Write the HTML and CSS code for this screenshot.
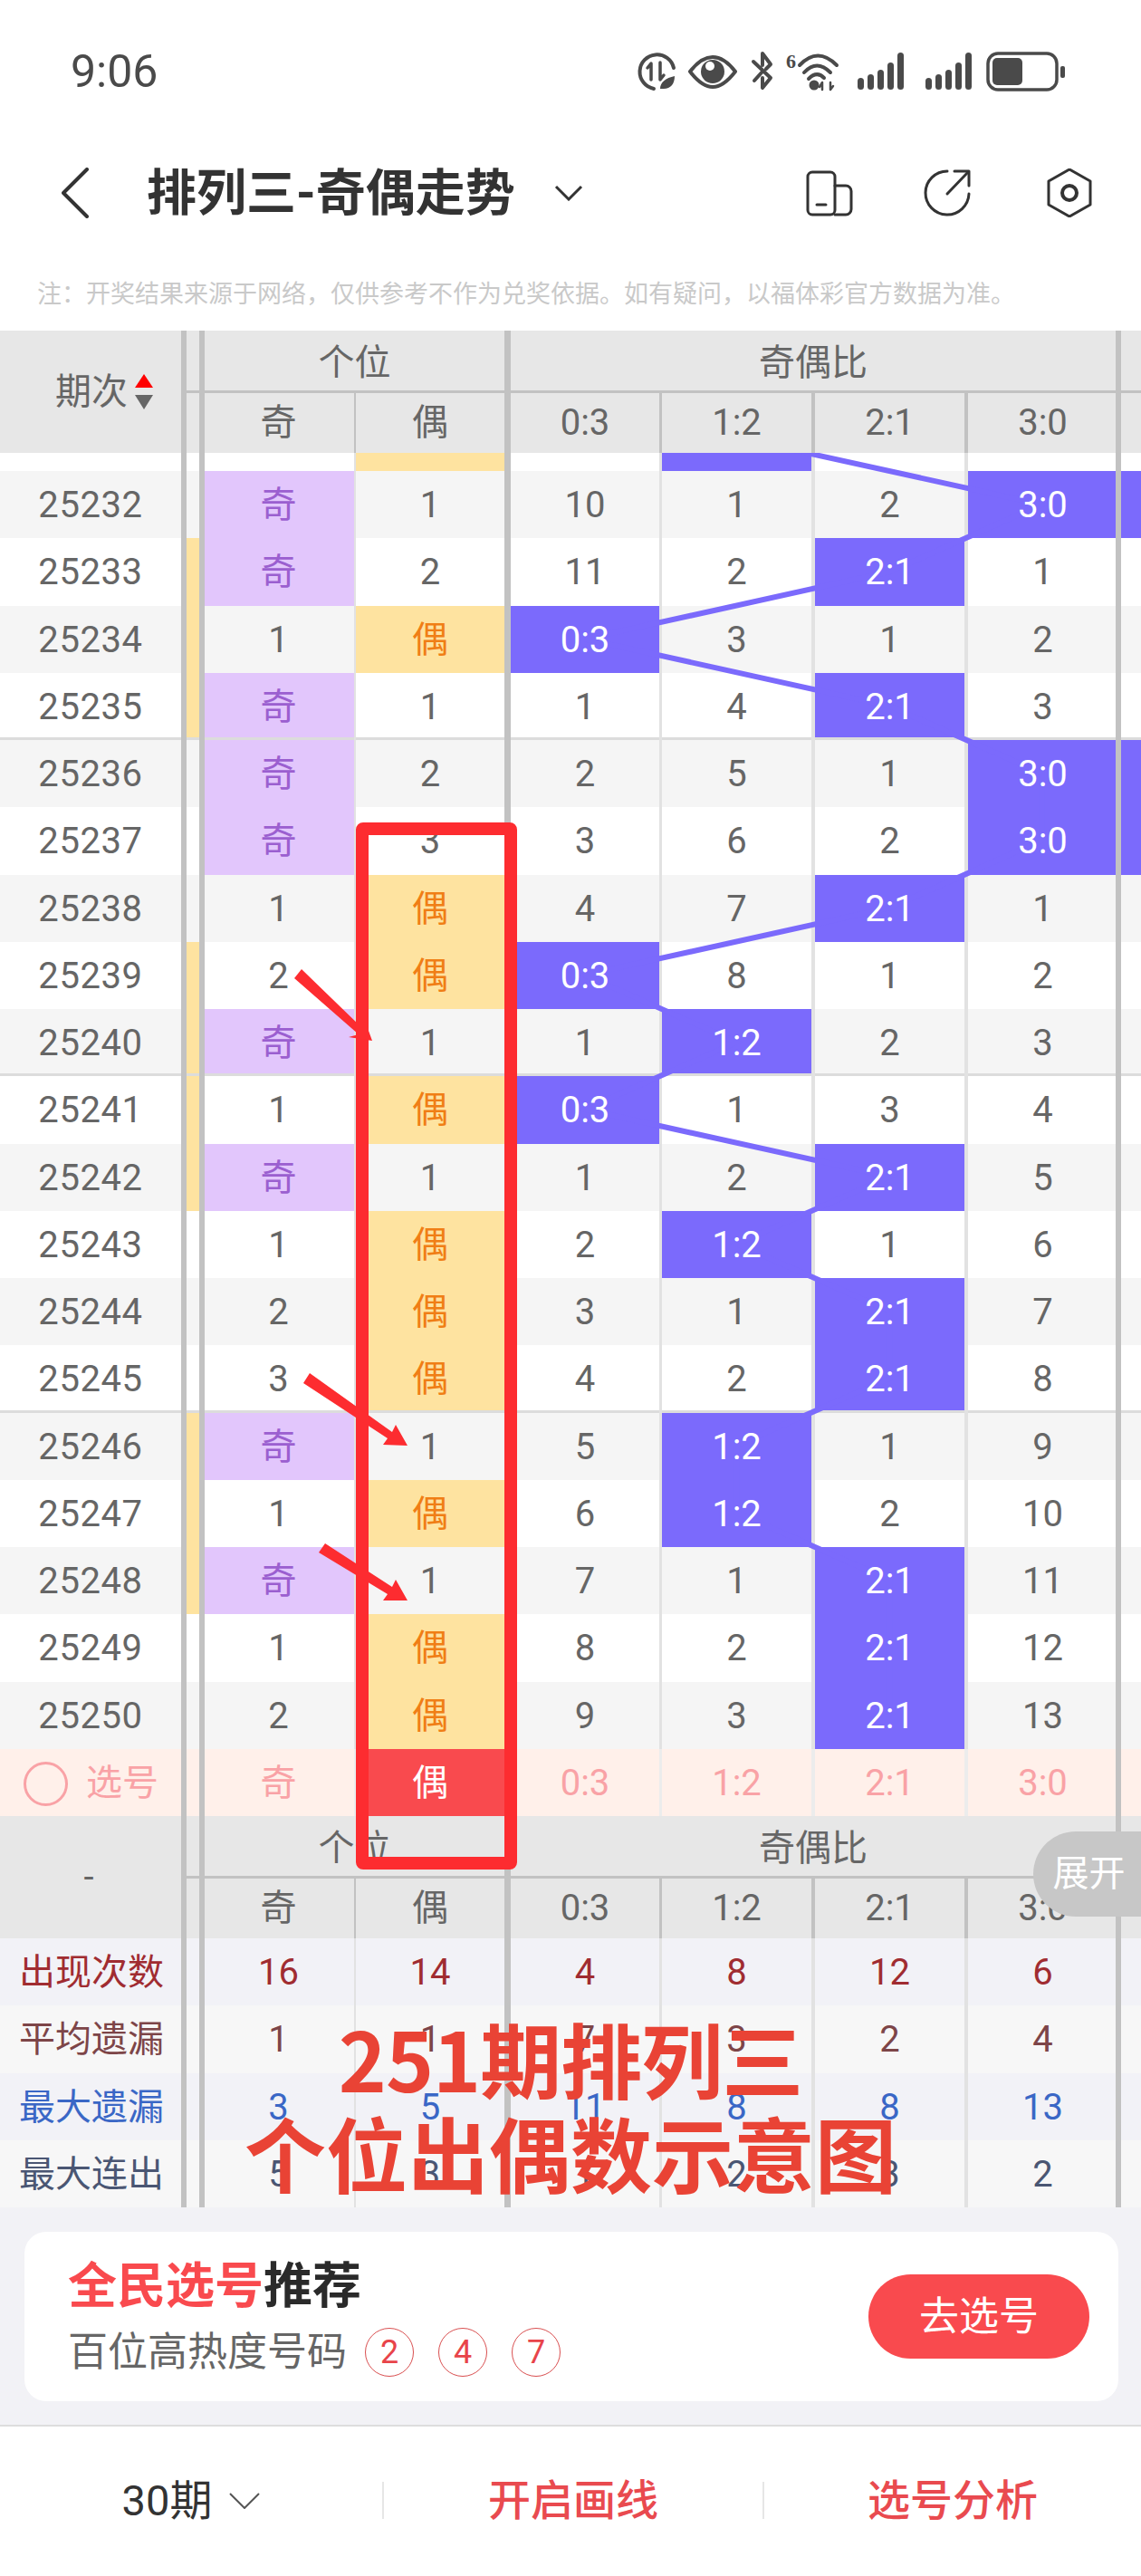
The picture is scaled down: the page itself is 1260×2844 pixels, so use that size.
FILE: index.html
```html
<!DOCTYPE html>
<html lang="zh-CN">
<head>
<meta charset="utf-8">
<title>排列三-奇偶走势</title>
<link rel="stylesheet" href="styles.css">
</head>
<body>
<div class="page">
  <header class="status">
    <span class="time">9:06</span>
    <svg class="status-icons" width="480" height="56" viewBox="700 50 480 56">
      <g fill="none" stroke="#4a4a4a" stroke-width="4" stroke-linecap="round" stroke-linejoin="round">
        <path d="M744 74A19 19 0 1 0 722 97"/>
        <path d="M719 87V69l-4 5M729 68V87l4-5" stroke-width="3.5"/>
        <path d="M762 78C772 65 780 62 787 62S802 65 812 78C802 91 794 95 787 95S772 91 762 78Z"/>
        <path d="M832 67L851 85L842 96V85M842 71V58L851 70L846 75M842 78L833 88"/>
        <path d="M883 71Q903 50 924 71"/>
        <path d="M888 79Q902 64 917 79"/>
        <path d="M893 86Q902 77 910 85"/>
        <path d="M908 98V90l-3 5M917 90V98l3-4" stroke-width="2.5"/>
      </g>
      <path d="M729 97C729 90 735 85 745 83C745 92 740 98 731 97Z" fill="#4a4a4a"/>
      <circle cx="787" cy="78" r="13" fill="#4a4a4a"/>
      <circle cx="784" cy="72" r="5" fill="#fff"/>
      <text class="six" x="868" y="74">6</text>
      <circle cx="899" cy="93" r="5.5" fill="#4a4a4a"/>
      <g fill="#4a4a4a">
        <rect x="947" y="85" width="7" height="13" rx="3.5"/>
        <rect x="958" y="81" width="7" height="17" rx="3.5"/>
        <rect x="969" y="76" width="7" height="22" rx="3.5"/>
        <rect x="980" y="68" width="7" height="30" rx="3.5"/>
        <rect x="991" y="57" width="7" height="41" rx="3.5"/>
        <rect x="1022" y="85" width="7" height="13" rx="3.5"/>
        <rect x="1033" y="81" width="7" height="17" rx="3.5"/>
        <rect x="1044" y="76" width="7" height="22" rx="3.5"/>
        <rect x="1055" y="68" width="7" height="30" rx="3.5"/>
        <rect x="1066" y="57" width="7" height="41" rx="3.5"/>
        <rect x="1096" y="63" width="33" height="30" rx="5"/>
        <rect x="1171" y="72" width="5" height="13" rx="2"/>
      </g>
      <rect x="1091" y="58" width="76" height="40" rx="11" fill="none" stroke="#4a4a4a" stroke-width="3.5"/>
    </svg>
  </header>

  <nav class="nav">
    <svg class="back" width="30" height="56" viewBox="68 183 30 56"><path d="M96 185L70 211L96 237" fill="none" stroke="#333" stroke-width="4" stroke-linecap="round" stroke-linejoin="round"/></svg>
    <h1 class="title">排列三-奇偶走势</h1>
    <svg class="caret" width="32" height="18" viewBox="0 0 32 18"><path d="M2 2L16 16L30 2" fill="none" stroke="#333" stroke-width="3"/></svg>
    <svg class="act act-first" width="52" height="54" viewBox="890 185 52 54">
      <g fill="none" stroke="#333" stroke-width="3" stroke-linecap="round"><rect x="892" y="189" width="30" height="47" rx="5"/><path d="M922 204h12a6 6 0 0 1 6 6v20a6 6 0 0 1-6 6h-12"/><path d="M902 225h10"/></g>
    </svg>
    <svg class="act act-second" width="52" height="54" viewBox="1019 185 52 54">
      <g fill="none" stroke="#333" stroke-width="3" stroke-linecap="round" stroke-linejoin="round"><path d="M1045 188A24 24 0 1 0 1069 213"/><path d="M1045 213L1068 189"/><path d="M1053 188H1069V204"/></g>
    </svg>
    <svg class="act act-third" width="52" height="54" viewBox="1156 185 52 54">
      <g fill="none" stroke="#333" stroke-width="3" stroke-linejoin="round"><path d="M1182 186L1205 199V225L1182 238L1159 225V199Z"/><circle cx="1182" cy="212" r="8" stroke-width="4"/></g>
    </svg>
  </nav>

  <p class="note">注：开奖结果来源于网络，仅供参考不作为兑奖依据。如有疑问，以福体彩官方数据为准。</p>

  <section class="chart">
    <div class="thead">
      <div class="corner"><span>期次</span><span class="sorter"><i class="tri-up"></i><i class="tri-down"></i></span></div>
      <div class="gap"></div>
      <div class="group group-one">个位</div>
      <div class="group group-two">奇偶比</div>
      <div class="gap gap-end"></div>
      <div class="hgap"></div>
      <div class="cell">奇</div><div class="cell">偶</div><div class="cell">0:3</div><div class="cell">1:2</div><div class="cell">2:1</div><div class="cell">3:0</div><div class="cell"></div>
    </div>

    <div class="rows">
      <div class="row row-cut"><div class="id"></div><div class="st"></div><div class="cell"></div><div class="cell even"><span>偶</span></div><div class="cell"></div><div class="cell on"></div><div class="cell"></div><div class="cell"></div><div class="cell"></div></div>
      <div class="row grey"><div class="id">25232</div><div class="st"></div><div class="cell odd"><span>奇</span></div><div class="cell"><span>1</span></div><div class="cell"><span>10</span></div><div class="cell"><span>1</span></div><div class="cell"><span>2</span></div><div class="cell on"><span>3:0</span></div><div class="cell on"></div></div>
      <div class="row"><div class="id">25233</div><div class="st mark"></div><div class="cell odd"><span>奇</span></div><div class="cell"><span>2</span></div><div class="cell"><span>11</span></div><div class="cell"><span>2</span></div><div class="cell on"><span>2:1</span></div><div class="cell"><span>1</span></div><div class="cell"></div></div>
      <div class="row grey"><div class="id">25234</div><div class="st mark"></div><div class="cell"><span>1</span></div><div class="cell even"><span>偶</span></div><div class="cell on"><span>0:3</span></div><div class="cell"><span>3</span></div><div class="cell"><span>1</span></div><div class="cell"><span>2</span></div><div class="cell"></div></div>
      <div class="row sep"><div class="id">25235</div><div class="st mark"></div><div class="cell odd"><span>奇</span></div><div class="cell"><span>1</span></div><div class="cell"><span>1</span></div><div class="cell"><span>4</span></div><div class="cell on"><span>2:1</span></div><div class="cell"><span>3</span></div><div class="cell"></div></div>
      <div class="row grey"><div class="id">25236</div><div class="st"></div><div class="cell odd"><span>奇</span></div><div class="cell"><span>2</span></div><div class="cell"><span>2</span></div><div class="cell"><span>5</span></div><div class="cell"><span>1</span></div><div class="cell on"><span>3:0</span></div><div class="cell on"></div></div>
      <div class="row"><div class="id">25237</div><div class="st"></div><div class="cell odd"><span>奇</span></div><div class="cell"><span>3</span></div><div class="cell"><span>3</span></div><div class="cell"><span>6</span></div><div class="cell"><span>2</span></div><div class="cell on"><span>3:0</span></div><div class="cell on"></div></div>
      <div class="row grey"><div class="id">25238</div><div class="st"></div><div class="cell"><span>1</span></div><div class="cell even"><span>偶</span></div><div class="cell"><span>4</span></div><div class="cell"><span>7</span></div><div class="cell on"><span>2:1</span></div><div class="cell"><span>1</span></div><div class="cell"></div></div>
      <div class="row"><div class="id">25239</div><div class="st mark"></div><div class="cell"><span>2</span></div><div class="cell even"><span>偶</span></div><div class="cell on"><span>0:3</span></div><div class="cell"><span>8</span></div><div class="cell"><span>1</span></div><div class="cell"><span>2</span></div><div class="cell"></div></div>
      <div class="row grey sep"><div class="id">25240</div><div class="st mark"></div><div class="cell odd"><span>奇</span></div><div class="cell"><span>1</span></div><div class="cell"><span>1</span></div><div class="cell on"><span>1:2</span></div><div class="cell"><span>2</span></div><div class="cell"><span>3</span></div><div class="cell"></div></div>
      <div class="row"><div class="id">25241</div><div class="st mark"></div><div class="cell"><span>1</span></div><div class="cell even"><span>偶</span></div><div class="cell on"><span>0:3</span></div><div class="cell"><span>1</span></div><div class="cell"><span>3</span></div><div class="cell"><span>4</span></div><div class="cell"></div></div>
      <div class="row grey"><div class="id">25242</div><div class="st mark"></div><div class="cell odd"><span>奇</span></div><div class="cell"><span>1</span></div><div class="cell"><span>1</span></div><div class="cell"><span>2</span></div><div class="cell on"><span>2:1</span></div><div class="cell"><span>5</span></div><div class="cell"></div></div>
      <div class="row"><div class="id">25243</div><div class="st"></div><div class="cell"><span>1</span></div><div class="cell even"><span>偶</span></div><div class="cell"><span>2</span></div><div class="cell on"><span>1:2</span></div><div class="cell"><span>1</span></div><div class="cell"><span>6</span></div><div class="cell"></div></div>
      <div class="row grey"><div class="id">25244</div><div class="st"></div><div class="cell"><span>2</span></div><div class="cell even"><span>偶</span></div><div class="cell"><span>3</span></div><div class="cell"><span>1</span></div><div class="cell on"><span>2:1</span></div><div class="cell"><span>7</span></div><div class="cell"></div></div>
      <div class="row sep"><div class="id">25245</div><div class="st"></div><div class="cell"><span>3</span></div><div class="cell even"><span>偶</span></div><div class="cell"><span>4</span></div><div class="cell"><span>2</span></div><div class="cell on"><span>2:1</span></div><div class="cell"><span>8</span></div><div class="cell"></div></div>
      <div class="row grey"><div class="id">25246</div><div class="st mark"></div><div class="cell odd"><span>奇</span></div><div class="cell"><span>1</span></div><div class="cell"><span>5</span></div><div class="cell on"><span>1:2</span></div><div class="cell"><span>1</span></div><div class="cell"><span>9</span></div><div class="cell"></div></div>
      <div class="row"><div class="id">25247</div><div class="st mark"></div><div class="cell"><span>1</span></div><div class="cell even"><span>偶</span></div><div class="cell"><span>6</span></div><div class="cell on"><span>1:2</span></div><div class="cell"><span>2</span></div><div class="cell"><span>10</span></div><div class="cell"></div></div>
      <div class="row grey"><div class="id">25248</div><div class="st mark"></div><div class="cell odd"><span>奇</span></div><div class="cell"><span>1</span></div><div class="cell"><span>7</span></div><div class="cell"><span>1</span></div><div class="cell on"><span>2:1</span></div><div class="cell"><span>11</span></div><div class="cell"></div></div>
      <div class="row"><div class="id">25249</div><div class="st"></div><div class="cell"><span>1</span></div><div class="cell even"><span>偶</span></div><div class="cell"><span>8</span></div><div class="cell"><span>2</span></div><div class="cell on"><span>2:1</span></div><div class="cell"><span>12</span></div><div class="cell"></div></div>
      <div class="row grey"><div class="id">25250</div><div class="st"></div><div class="cell"><span>2</span></div><div class="cell even"><span>偶</span></div><div class="cell"><span>9</span></div><div class="cell"><span>3</span></div><div class="cell on"><span>2:1</span></div><div class="cell"><span>13</span></div><div class="cell"></div></div>
      <svg class="trend" width="1260" height="1431" viewBox="0 0 1260 1431">
        <polyline points="813.5,-17 1150.5,57 982.5,131.2 646,205.4 982.5,279.6 1150.5,353.8 1150.5,428 982.5,502.2 646,576.4 813.5,650.6 646,724.8 982.5,799 813.5,873.2 982.5,947.4 982.5,1021.6 813.5,1095.8 813.5,1170 982.5,1244.2 982.5,1392.6"/>
      </svg>
    </div>

    <div class="row pick">
      <div class="id"><i class="ring"></i><span>选号</span></div><div class="st"></div>
      <div class="cell">奇</div><div class="cell sel">偶</div><div class="cell">0:3</div><div class="cell">1:2</div><div class="cell">2:1</div><div class="cell">3:0</div><div class="cell"></div>
    </div>

    <div class="thead">
      <div class="corner corner-dash"><span>-</span></div>
      <div class="gap"></div>
      <div class="group group-one">个位</div>
      <div class="group group-two">奇偶比</div>
      <div class="gap gap-end"></div>
      <div class="hgap"></div>
      <div class="cell">奇</div><div class="cell">偶</div><div class="cell">0:3</div><div class="cell">1:2</div><div class="cell">2:1</div><div class="cell">3:0</div><div class="cell"></div>
    </div>

    <div class="row stat tone-red band"><div class="id">出现次数</div><div class="st"></div><div class="cell">16</div><div class="cell">14</div><div class="cell">4</div><div class="cell">8</div><div class="cell">12</div><div class="cell">6</div><div class="cell"></div></div>
    <div class="row stat tone-brown"><div class="id">平均遗漏</div><div class="st"></div><div class="cell">1</div><div class="cell">1</div><div class="cell">7</div><div class="cell">3</div><div class="cell">2</div><div class="cell">4</div><div class="cell"></div></div>
    <div class="row stat tone-blue band"><div class="id">最大遗漏</div><div class="st"></div><div class="cell">3</div><div class="cell">5</div><div class="cell">11</div><div class="cell">8</div><div class="cell">8</div><div class="cell">13</div><div class="cell"></div></div>
    <div class="row stat tone-slate"><div class="id">最大连出</div><div class="st"></div><div class="cell">5</div><div class="cell">3</div><div class="cell">1</div><div class="cell">2</div><div class="cell">3</div><div class="cell">2</div><div class="cell"></div></div>

    <button class="expand">展开</button>
  </section>

  <section class="promo">
    <div class="card">
      <div class="card-text">
        <h2 class="card-title"><em>全民选号</em>推荐</h2>
        <div class="card-sub">百位高热度号码<span class="ball first">2</span><span class="ball">4</span><span class="ball">7</span></div>
      </div>
      <button class="go">去选号</button>
    </div>
  </section>

  <footer class="bottom">
    <div class="tab tab-period">30期<svg width="34" height="18" viewBox="0 0 34 18"><path d="M1 1L17 17L33 1" fill="none" stroke="#555" stroke-width="2"/></svg></div>
    <div class="tab tab-red">开启画线</div>
    <div class="tab tab-red">选号分析</div>
  </footer>

  <div class="box"></div>
  <svg class="arrows" width="1260" height="2844" viewBox="0 0 1260 2844">
    <g fill="#fd2c30">
      <path d="M333 1070L325 1080L396 1142L385 1145L411 1149L403 1127L400 1135Z"/>
      <path d="M342 1516L335 1527L428 1588L423 1595L450 1596L437 1573L433 1581Z"/>
      <path d="M359 1704L352 1714L428 1760L423 1767L450 1767L437 1744L433 1752Z"/>
    </g>
  </svg>
  <div class="caption"><span class="caption-first">251期排列三</span><br>个位出偶数示意图</div>
</div>
</body>
</html>
```
FILE: styles.css
```css
* { box-sizing: border-box; }
html, body { margin: 0; padding: 0; }
body { background: #fff; font-family: Roboto, "Noto Sans CJK SC", sans-serif; color: #666; }
.page { position: relative; width: 1260px; height: 2844px; overflow: hidden; background: #fff; }

/* status bar */
.status { height: 158px; display: flex; align-items: center; justify-content: space-between; padding: 0 80px 0 78px; }
.time { font-size: 50px; line-height: 60px; color: #4a4a4a; }
.status-icons { display: block; }
.six { font: bold 22px "Liberation Serif", serif; fill: #4a4a4a; }

/* navigation */
.nav { height: 109px; display: flex; align-items: center; padding-left: 68px; }
.back { flex: none; }
.title { margin: 0 0 0 64px; font-size: 55px; line-height: 64px; font-weight: 700; color: #333; white-space: nowrap; }
.caret { flex: none; margin-left: 43px; }
.act { flex: none; }
.act-first { margin-left: 246px; }
.act-second { margin-left: 78px; }
.act-third { margin-left: 83px; }

.note { margin: 0; height: 98px; padding: 38px 0 20px 41px; font-size: 27px; line-height: 40px; color: #c9c9c9; white-space: nowrap; }

/* chart */
.chart { position: relative; background: #fff; }
.thead, .row { display: grid; grid-template-columns: 206px 14px 173px 171px 167px 169px 169px 169px 22px; }

.thead { grid-template-rows: 69px 66px; height: 135px; background: #e7e7e7; font-size: 40px; }
.corner { grid-row: 1 / 3; display: flex; align-items: center; justify-content: center; gap: 8px; padding-left: 30px; border-right: 6px solid #c2c2c2; line-height: 1; }
.corner-dash { padding-left: 0; padding-right: 4px; }
.sorter { display: flex; flex-direction: column; gap: 8px; }
.tri-up { width: 0; height: 0; border: 10px solid transparent; border-top: 0; border-bottom: 15px solid #f00; }
.tri-down { width: 0; height: 0; border: 10px solid transparent; border-bottom: 0; border-top: 16px solid #666; }
.gap { border-bottom: 3px solid #c2c2c2; }
.gap-end { grid-column: 9; }
.group { display: flex; align-items: center; justify-content: center; border-bottom: 3px solid #c2c2c2; padding-bottom: 3px; }
.group-one { grid-column: 3 / 5; border-left: 6px solid #c2c2c2; border-right: 7px solid #c2c2c2; }
.group-two { grid-column: 5 / 9; border-right: 6px solid #c2c2c2; }
.hgap { grid-column: 2; }

.cell { display: flex; align-items: center; justify-content: center; padding-top: 2px; font-size: 40px; line-height: 1; color: #666; border-right: 3px solid #e2e2e2; }
.cell span { position: relative; z-index: 2; }
.thead .cell { border-right-color: #c2c2c2; padding-top: 0; padding-bottom: 1px; }
.cell:nth-child(3), .thead .cell:nth-child(7) { border-left: 6px solid #c2c2c2; border-right-width: 2px; padding-right: 2px; }
.cell:nth-child(4), .thead .cell:nth-child(8) { border-right: 7px solid #c2c2c2; }
.cell:nth-child(5), .thead .cell:nth-child(9) { border-right-width: 3px; }
.cell:nth-child(6), .cell:nth-child(7), .thead .cell:nth-child(10), .thead .cell:nth-child(11) { border-right-width: 4px; }
.row .cell:nth-child(8), .thead .cell:nth-child(12) { border-right: 6px solid #c2c2c2; padding-left: 2px; }
.row .cell:nth-child(9), .thead .cell:nth-child(13) { border-right: 0; }
.thead .cell:nth-child(7) { border-right-width: 2px; border-right-color: #c2c2c2; }
.thead .cell:nth-child(10) { border-right-width: 4px; }

.rows { position: relative; height: 1431px; overflow: hidden; }
.row { height: 74.25px; background: #fff; }
.row-cut { margin-top: -54.25px; }
.row-cut .cell { padding-top: 0; padding-bottom: 3px; }
.grey { background: #f5f5f5; }
.id { display: flex; align-items: center; justify-content: center; padding-top: 2px; font-size: 40px; line-height: 1; letter-spacing: 0.6px; color: #666; border-right: 6px solid #c2c2c2; }
.st.mark { background: #fee3a0; }
.odd { background-color: #e2c6fc; color: #9b5fd0; }
.even { background-color: #fee3a0; color: #f07e15; }
.on { background-color: #7b6afc; color: #fff; }
.sep > * { box-shadow: inset 0 -3px 0 #dcdcdc; }
.trend { position: absolute; left: 0; top: 0; z-index: 1; pointer-events: none; }
.trend polyline { fill: none; stroke: #7b6afc; stroke-width: 6; }

.pick { height: 74px; background: #fff0ea; }
.pick .cell { color: #f9a2a6; border-right-color: #ececec; }
.pick .cell.sel { background-color: #f94a4e; color: #fff; }
.pick .id { justify-content: flex-start; padding-left: 26px; letter-spacing: 0; color: #f9a2a6; }
.ring { flex: none; width: 49px; height: 49px; border: 3px solid #f9a2a6; border-radius: 50%; margin-right: 20px; }

.stat { background: #f7f7f7; font-weight: 400; }
.band { background: #f2f2f7; }
.stat .id { font-size: 40px; letter-spacing: 0; padding-left: 2px; }
.tone-red .id, .tone-red .cell { color: #a02c31; }
.tone-brown .id, .tone-brown .cell { color: #7d4548; }
.tone-blue .id, .tone-blue .cell { color: #3a67c6; }
.tone-slate .id, .tone-slate .cell { color: #4a5673; }

.expand { position: absolute; right: 0; top: 1657px; width: 119px; height: 94px; padding: 0 0 0 4px; border: 0; border-radius: 47px 0 0 47px; background: #c7c7c7; color: #fff; font: 400 40px/1 Roboto, "Noto Sans CJK SC", sans-serif; z-index: 3; }

/* promo card */
.promo { height: 240px; padding: 27px 25px 0 27px; background: #f2f2f6; }
.card { height: 187px; display: flex; justify-content: space-between; padding: 0 32px 0 48px; background: #fff; border-radius: 24px; }
.card-text { padding-top: 31px; }
.card-title { margin: 0; font-size: 54px; line-height: 60px; font-weight: 700; color: #2a2a2a; white-space: nowrap; }
.card-title em { font-style: normal; color: #f94a4e; }
.card-sub { display: flex; align-items: center; gap: 27px; height: 56px; margin-top: 14px; font-size: 44px; line-height: 1; color: #666; white-space: nowrap; }
.ball { display: flex; align-items: center; justify-content: center; width: 54px; height: 54px; border: 1.5px solid #d94f50; border-radius: 50%; font-size: 36px; color: #e8444a; }
.ball.first { margin-left: -7px; }
.go { flex: none; align-self: flex-start; width: 244px; height: 93px; margin-top: 47px; padding: 0; border: 0; border-radius: 47px; background: #f94a4e; color: #fff; font: 400 44px/1 Roboto, "Noto Sans CJK SC", sans-serif; }

/* footer */
.bottom { height: 167px; display: grid; grid-template-columns: 422px 420px 418px; align-items: center; border-top: 2px solid #ddd; background: #fff; padding-bottom: 2px; }
.tab { display: flex; align-items: center; justify-content: center; height: 41px; font-size: 47px; line-height: 1; color: #333; white-space: nowrap; }
.tab + .tab { border-left: 2px solid #e6e6e6; }
.tab svg { margin-left: 19px; }
.tab-red { color: #e94a4f; font-weight: 500; }

/* hand-drawn annotations over the screenshot */
.box { position: absolute; left: 393px; top: 908px; width: 178px; height: 1156px; border: 14px solid #fd2c30; border-radius: 8px; z-index: 4; }
.arrows { position: absolute; left: 0; top: 0; z-index: 5; pointer-events: none; }
.caption { position: absolute; left: 0; top: 2219px; width: 1260px; text-align: center; font-family: "Noto Sans CJK SC", sans-serif; font-size: 90px; line-height: 104px; font-weight: 700; color: #e94335; z-index: 6; }
.caption-first { letter-spacing: -1px; }
```
